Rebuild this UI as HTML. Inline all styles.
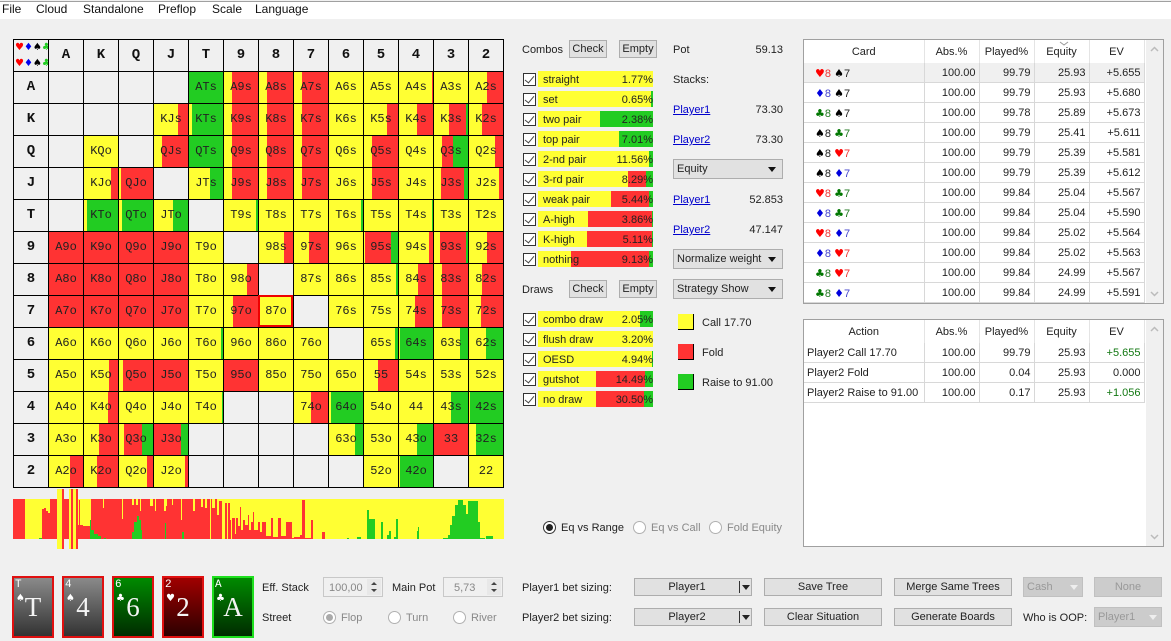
<!DOCTYPE html>
<html><head><meta charset="utf-8"><style>
html,body{margin:0;padding:0}
body{width:1171px;height:641px;overflow:hidden;background:#f0f0f0;position:relative;font:11px "Liberation Sans",sans-serif;color:#222}
.a{position:absolute;white-space:nowrap;line-height:14px;margin-top:1px}
.m{font-size:12px;color:#111;margin-top:0}
.menu{position:absolute;left:0;top:1px;width:1171px;height:18px;background:#fff;border-top:1px solid #a0a0a0;box-sizing:border-box}
.g{position:absolute;left:13px;top:39px;display:grid;grid-template-columns:repeat(14,34px);grid-auto-rows:31px;gap:1px;padding:1px;background:#000;font:12px/31px "Liberation Mono",monospace;color:#222;text-align:center}
.g b{--a:34px;--b:34px;font-weight:normal;background:linear-gradient(90deg,#ff3 var(--a),#f33 var(--a) var(--b),#2c2 var(--b))}
.g i{background:#f0f0f0}
.g em{background:#f0f0f0;font:bold 14px/31px "Liberation Mono",monospace;color:#111}
.g em.corner{font:10px/16px "DejaVu Sans",sans-serif;letter-spacing:0;white-space:pre;text-align:left;padding-left:1px;overflow:hidden}
.btn{position:absolute;box-sizing:border-box;background:#e1e1e1;border:1px solid #adadad;text-align:center;line-height:17px;color:#222}
.dis{color:#999;background:#ccc;border-color:#c0c0c0}
.c{position:absolute;left:523px;width:11px;height:11px;border:1px solid #333;background:#fff}
.c::after{content:"";position:absolute;left:3px;top:0;width:4px;height:8px;border:solid #444;border-width:0 1px 1px 0;transform:rotate(40deg)}
.bar{--a:115px;--b:115px;position:absolute;left:538px;width:115px;height:16px;line-height:16px;background:linear-gradient(90deg,#ff3 var(--a),#f33 var(--a) var(--b),#2c2 var(--b));color:#222}
.bar span{position:absolute;left:5px;top:1px}.bar u{position:absolute;right:0;top:1px;text-decoration:none}
.lnk{color:#00c;text-decoration:underline}
.cb{position:absolute;left:673px;width:110px;height:20px;box-sizing:border-box;background:#e1e1e1;border:1px solid #adadad;line-height:19px;padding-left:3px}
.cb::after{content:"";position:absolute;right:6px;top:7px;border:4px solid transparent;border-top:5px solid #111;border-bottom:0}
.sq{position:absolute;left:678px;width:15px;height:15px;border-right:1px solid #000;border-bottom:1px solid #000}
.frame{position:absolute;left:803px;width:359px;background:#fff;border:1px solid #a0a0a0;overflow:hidden}
table{position:absolute;left:0;top:0;table-layout:fixed;border-collapse:collapse;width:340px;font-size:11px;color:#222}
th{font-weight:normal;height:23px;padding:0;border-right:1px solid #e4e4e4;background:#fff}
td{height:18px;padding:1px 3px 0 0;text-align:right;border-right:1px solid #d8d8d8;border-bottom:1px solid #d8d8d8;line-height:14px}
td.k{text-align:left;padding-left:11px;white-space:pre}
td.l{text-align:left;padding-left:3px;white-space:nowrap}
tr.s td{background:#f0f0f0}
.k span{font:11px "DejaVu Sans",sans-serif;position:relative;top:1px}
.k .hh,.k .dd,.k .pp,.k .qq{font:11px "Liberation Sans",sans-serif}
.h{color:#f00}.hh{color:#e33}.d{color:#00d}.dd{color:#44c}.p{color:#000}.pp{color:#222}.q{color:#070}.qq{color:#272}
.plus{color:#171}
.sb{position:absolute;right:0;top:0;bottom:0;width:17px;background:#f0f0f0}
.sb svg{position:absolute;left:4px}
.r{position:absolute;width:11px;height:11px;border:1px solid #b0b0b0;border-radius:50%;background:#fff}
.r.on::after{content:"";position:absolute;left:2px;top:2px;width:7px;height:7px;border-radius:50%;background:#aaa}
.r.blk{border-color:#333}.r.blk::after{background:#222}
.card{position:absolute;top:576px;width:38px;height:58px;border:2px solid #e01010;color:#fff;overflow:hidden}
.card .t{position:absolute;left:1px;top:1px;font:11px/12px "Liberation Mono",monospace}
.card .s{position:absolute;left:2px;top:14px;font:10px/14px "DejaVu Sans",sans-serif}
.card .n{position:absolute;left:0;right:0;top:12px;text-align:center;font:27px/34px "Liberation Serif",serif;color:#f4f4f4}
.gy{background:linear-gradient(#8a8a8a,#333)}.gn{background:linear-gradient(#008a00,#002c00)}.rd{background:linear-gradient(#a00000,#2c0000)}
.spin{position:absolute;top:577px;width:60px;height:20px;box-sizing:border-box;border:1px solid #c8c8c8;color:#888;line-height:20px;background:#f0f0f0}
.gr{color:#888}
.dd2{position:absolute;left:739px;width:1px;height:12px;background:#333}
.arr{position:absolute;border:4px solid transparent;border-top:5px solid #222;border-bottom:0}
.hlb{position:absolute;left:258px;top:295px;width:31px;height:28px;border:2px solid #e00}
</style></head><body>
<div class="menu"></div>
<div class="a m" style="left:2px;top:2px">File</div><div class="a m" style="left:36px;top:2px">Cloud</div><div class="a m" style="left:83px;top:2px">Standalone</div><div class="a m" style="left:158px;top:2px">Preflop</div><div class="a m" style="left:212px;top:2px">Scale</div><div class="a m" style="left:255px;top:2px">Language</div>

<div class="g">
<em class="corner"><span style="color:#f00">♥</span><span style="color:#00e">♦</span><span style="color:#000">♠</span><span style="color:#2c2">♣</span>
<span style="color:#f00">♥</span><span style="color:#00e">♦</span><span style="color:#000">♠</span><span style="color:#2c2">♣</span></em><em>A</em><em>K</em><em>Q</em><em>J</em><em>T</em><em>9</em><em>8</em><em>7</em><em>6</em><em>5</em><em>4</em><em>3</em><em>2</em>
<em>A</em><i></i><i></i><i></i><i></i><b style="--a:0px;--b:0px">ATs</b><b style="--a:8px">A9s</b><b style="--a:8px">A8s</b><b style="--a:8px">A7s</b><b>A6s</b><b>A5s</b><b style="--a:33px">A4s</b><b>A3s</b><b style="--a:18px">A2s</b>
<em>K</em><i></i><i></i><i></i><b style="--a:24px">KJs</b><b style="--a:3px;--b:3px">KTs</b><b style="--a:8px">K9s</b><b style="--a:8px">K8s</b><b style="--a:8px">K7s</b><b>K6s</b><b style="--a:23px">K5s</b><b style="--a:18px">K4s</b><b style="--a:15px;--b:32px">K3s</b><b style="--a:13px">K2s</b>
<em>Q</em><i></i><b>KQo</b><i></i><b style="--a:8px">QJs</b><b style="--a:0px;--b:0px">QTs</b><b style="--a:8px">Q9s</b><b style="--a:8px">Q8s</b><b style="--a:8px">Q7s</b><b>Q6s</b><b style="--a:8px">Q5s</b><b>Q4s</b><b style="--a:8px;--b:19px">Q3s</b><b style="--a:26px">Q2s</b>
<em>J</em><i></i><b style="--a:27px">KJo</b><b style="--a:2px">QJo</b><i></i><b style="--a:21px;--b:21px">JTs</b><b style="--a:8px">J9s</b><b style="--a:8px">J8s</b><b style="--a:8px">J7s</b><b>J6s</b><b style="--a:8px">J5s</b><b>J4s</b><b style="--a:7px;--b:30px">J3s</b><b style="--a:30px">J2s</b>
<em>T</em><i></i><b style="--a:3px;--b:3px">KTo</b><b style="--a:3px;--b:3px">QTo</b><b style="--a:19px;--b:19px">JTo</b><i></i><b style="--a:32px;--b:32px">T9s</b><b>T8s</b><b>T7s</b><b style="--a:32px;--b:32px">T6s</b><b>T5s</b><b style="--a:33px;--b:33px">T4s</b><b>T3s</b><b>T2s</b>
<em>9</em><b style="--a:0px">A9o</b><b style="--a:0px">K9o</b><b style="--a:0px">Q9o</b><b style="--a:0px">J9o</b><b>T9o</b><i></i><b style="--a:25px">98s</b><b style="--a:15px">97s</b><b>96s</b><b style="--a:1px;--b:27px">95s</b><b style="--a:30px">94s</b><b style="--a:6px;--b:32px">93s</b><b style="--a:18px">92s</b>
<em>8</em><b style="--a:0px">A8o</b><b style="--a:0px">K8o</b><b style="--a:0px">Q8o</b><b style="--a:0px">J8o</b><b>T8o</b><b style="--a:23px">98o</b><i></i><b>87s</b><b>86s</b><b style="--a:32px;--b:32px">85s</b><b style="--a:19px">84s</b><b style="--a:8px">83s</b><b style="--a:13px">82s</b>
<em>7</em><b style="--a:0px">A7o</b><b style="--a:0px">K7o</b><b style="--a:0px">Q7o</b><b style="--a:0px">J7o</b><b>T7o</b><b style="--a:9px">97o</b><b>87o</b><i></i><b>76s</b><b>75s</b><b style="--a:16px">74s</b><b style="--a:8px">73s</b><b style="--a:12px">72s</b>
<em>6</em><b>A6o</b><b>K6o</b><b>Q6o</b><b>J6o</b><b style="--a:32px;--b:32px">T6o</b><b>96o</b><b>86o</b><b>76o</b><i></i><b style="--a:31px;--b:31px">65s</b><b style="--a:1px;--b:1px">64s</b><b style="--a:26px;--b:26px">63s</b><b style="--a:17px;--b:17px">62s</b>
<em>5</em><b>A5o</b><b style="--a:25px">K5o</b><b style="--a:4px">Q5o</b><b style="--a:0px">J5o</b><b>T5o</b><b style="--a:0px">95o</b><b>85o</b><b>75o</b><b>65o</b><b style="--a:14px">55</b><b>54s</b><b>53s</b><b>52s</b>
<em>4</em><b>A4o</b><b style="--a:24px">K4o</b><b>Q4o</b><b>J4o</b><b style="--a:33px;--b:33px">T4o</b><i></i><i></i><b style="--a:17px">74o</b><b style="--a:2px;--b:2px">64o</b><b>54o</b><b>44</b><b style="--a:17px;--b:17px">43s</b><b style="--a:1px;--b:1px">42s</b>
<em>3</em><b>A3o</b><b style="--a:15px">K3o</b><b style="--a:5px;--b:23px">Q3o</b><b style="--a:0px;--b:27px">J3o</b><i></i><i></i><i></i><i></i><b style="--a:26px;--b:26px">63o</b><b>53o</b><b style="--a:18px;--b:18px">43o</b><b style="--a:0px">33</b><b style="--a:7px;--b:7px">32s</b>
<em>2</em><b style="--a:21px">A2o</b><b style="--a:13px">K2o</b><b style="--a:28px">Q2o</b><b style="--a:31px">J2o</b><i></i><i></i><i></i><i></i><i></i><b>52o</b><b style="--a:1px;--b:1px">42o</b><i></i><b>22</b>
</div>
<div class="hlb"></div>

<svg style="position:absolute;left:0;top:485px" width="520" height="70" viewBox="0 485 520 70">
<rect x="13" y="499" width="491" height="40" fill="#ff3"/>
<rect x="57" y="489" width="7" height="60" fill="#ff3"/><rect x="69" y="489" width="9" height="60" fill="#ff3"/>
<rect x="62" y="489" width="2" height="60" fill="#f33"/><rect x="71" y="489" width="2" height="60" fill="#f33"/><rect x="76" y="489" width="2" height="60" fill="#f33"/>
<path fill="#f33" d="M13 539V499H25V539H42V509H44V508H46V511H48V513H50V499H57V539H64V499H69V539H78V525H79V500H80V525H83V526H90V539H91V499H103V508H104V499H122V519H123V499H132V505H134V499H136V505H138V499H140V511H141V499H150V506H153V499H155V511H156V499H164V511H166V506H167V499H172V505H173V499H181V520H182V499H193V511H195V499H201V507H203V499H205V508H207V499H210V539H211V499H212V508H215V499H217V515H219V501H222V539H225V503H227V539H228V503H230V520H231V539H232V518H235V534H236V518H238V526H240V507H241V530H243V520H245V525H248V515H249V530H251V522H253V512H254V530H258V522H260V532H262V522H266V536H271V518H273V537H278V518H281V536H286V522H292V538H294V537H300V535H302V500H305V538H311V520H313V539H322V532H325V539H13Z"/>
<path fill="#2c2" d="M39 539V538H42V539ZM90 539V520H91V530H94V534H98V536H101V539ZM104 539V538H106V539ZM132 539V532H134V522H137V516H139V520H141V530H142V539ZM165 539V523H166V539ZM182 539V532H184V539ZM347 539V538H349V539ZM357 539V537H361V539ZM367 539V510H369V519H375V539ZM381 539V522H383V539ZM387 539V535H389V531H391V539ZM394 539V537H396V519H398V539ZM417 539V531H418V527H419V539ZM443 539V538H448V535H450V525H452V516H455V505H458V500H463V505H466V514H468V501H478V522H480V538H485V539ZM486 539V536H493V539Z"/>
</svg>

<div class="card gy" style="left:12px"><span class="t">T</span><span class="s">♠</span><span class="n">T</span></div>
<div class="card gy" style="left:62px"><span class="t">4</span><span class="s">♠</span><span class="n">4</span></div>
<div class="card gn" style="left:112px"><span class="t">6</span><span class="s">♣</span><span class="n">6</span></div>
<div class="card rd" style="left:162px"><span class="t">2</span><span class="s">♥</span><span class="n">2</span></div>
<div class="card gn" style="left:212px;border-color:#1ee01e"><span class="t">A</span><span class="s">♣</span><span class="n">A</span></div>

<div class="a" style="left:262px;top:580px">Eff. Stack</div>
<div class="spin" style="left:323px;padding-left:5px">100,00<svg style="position:absolute;right:1px;top:1px" width="14" height="16"><rect width="14" height="16" fill="#e8e8e8"/><path d="M4 6l3-3 3 3zM4 10l3 3 3-3z" fill="#444"/></svg></div>
<div class="a" style="left:392px;top:580px">Main Pot</div>
<div class="spin" style="left:443px;padding-left:10px">5,73<svg style="position:absolute;right:1px;top:1px" width="14" height="16"><rect width="14" height="16" fill="#e8e8e8"/><path d="M4 6l3-3 3 3zM4 10l3 3 3-3z" fill="#444"/></svg></div>
<div class="a" style="left:262px;top:610px">Street</div>
<div class="r on" style="left:323px;top:611px"></div><div class="a gr" style="left:341px;top:610px">Flop</div>
<div class="r" style="left:388px;top:611px"></div><div class="a gr" style="left:406px;top:610px">Turn</div>
<div class="r" style="left:453px;top:611px"></div><div class="a gr" style="left:471px;top:610px">River</div>

<div class="a" style="left:522px;top:42px">Combos</div>
<div class="btn" style="left:569px;top:40px;width:38px;height:18px">Check</div>
<div class="btn" style="left:619px;top:40px;width:38px;height:18px">Empty</div>

<div class="c" style="top:73px"></div><div class="bar" style="top:71px"><span>straight</span><u>1.77%</u></div>
<div class="c" style="top:93px"></div><div class="bar" style="top:91px;--a:113px;--b:113px"><span>set</span><u>0.65%</u></div>
<div class="c" style="top:113px"></div><div class="bar" style="top:111px;--a:62px;--b:62px"><span>two pair</span><u>2.38%</u></div>
<div class="c" style="top:133px"></div><div class="bar" style="top:131px;--a:81px;--b:81px"><span>top pair</span><u>7.01%</u></div>
<div class="c" style="top:153px"></div><div class="bar" style="top:151px;--a:111px;--b:111px"><span>2-nd pair</span><u>11.56%</u></div>
<div class="c" style="top:173px"></div><div class="bar" style="top:171px;--a:90px;--b:108px"><span>3-rd pair</span><u>8.29%</u></div>
<div class="c" style="top:193px"></div><div class="bar" style="top:191px;--a:73px;--b:111px"><span>weak pair</span><u>5.44%</u></div>
<div class="c" style="top:213px"></div><div class="bar" style="top:211px;--a:50px;--b:114px"><span>A-high</span><u>3.86%</u></div>
<div class="c" style="top:233px"></div><div class="bar" style="top:231px;--a:49px;--b:114px"><span>K-high</span><u>5.11%</u></div>
<div class="c" style="top:253px"></div><div class="bar" style="top:251px;--a:33px;--b:111px"><span>nothing</span><u>9.13%</u></div>

<div class="a" style="left:522px;top:282px">Draws</div>
<div class="btn" style="left:569px;top:280px;width:38px;height:18px">Check</div>
<div class="btn" style="left:619px;top:280px;width:38px;height:18px">Empty</div>

<div class="c" style="top:313px"></div><div class="bar" style="top:311px;--a:102px;--b:102px"><span>combo draw</span><u>2.05%</u></div>
<div class="c" style="top:333px"></div><div class="bar" style="top:331px"><span>flush draw</span><u>3.20%</u></div>
<div class="c" style="top:353px"></div><div class="bar" style="top:351px;--a:114px;--b:114px"><span>OESD</span><u>4.94%</u></div>
<div class="c" style="top:373px"></div><div class="bar" style="top:371px;--a:58px;--b:107px"><span>gutshot</span><u>14.49%</u></div>
<div class="c" style="top:393px"></div><div class="bar" style="top:391px;--a:58px;--b:106px"><span>no draw</span><u>30.50%</u></div>

<div class="a" style="left:673px;top:42px">Pot</div><div class="a" style="right:388px;top:42px">59.13</div>
<div class="a" style="left:673px;top:72px">Stacks:</div>
<div class="a lnk" style="left:673px;top:102px">Player1</div><div class="a" style="right:388px;top:102px">73.30</div>
<div class="a lnk" style="left:673px;top:132px">Player2</div><div class="a" style="right:388px;top:132px">73.30</div>
<div class="cb" style="top:159px">Equity</div>
<div class="a lnk" style="left:673px;top:192px">Player1</div><div class="a" style="right:388px;top:192px">52.853</div>
<div class="a lnk" style="left:673px;top:222px">Player2</div><div class="a" style="right:388px;top:222px">47.147</div>
<div class="cb" style="top:249px">Normalize weight</div>
<div class="cb" style="top:279px">Strategy Show</div>
<div class="sq" style="top:314px;background:#ff3"></div><div class="a" style="left:702px;top:315px">Call 17.70</div>
<div class="sq" style="top:344px;background:#f33"></div><div class="a" style="left:702px;top:345px">Fold</div>
<div class="sq" style="top:374px;background:#2c2"></div><div class="a" style="left:702px;top:375px">Raise to 91.00</div>

<div class="r blk on" style="left:543px;top:521px"></div><div class="a" style="left:561px;top:520px">Eq vs Range</div>
<div class="r" style="left:633px;top:521px"></div><div class="a gr" style="left:651px;top:520px">Eq vs Call</div>
<div class="r" style="left:709px;top:521px"></div><div class="a gr" style="left:727px;top:520px">Fold Equity</div>

<div class="frame" style="top:39px;height:263px">
<table><colgroup><col style="width:120px"><col style="width:55px"><col style="width:55px"><col style="width:55px"><col style="width:55px"></colgroup>
<tr><th>Card</th><th>Abs.%</th><th>Played%</th><th>Equity</th><th>EV</th></tr>
<tr class="s"><td class="k"><span class="h">♥</span><span class="hh">8</span> <span class="p">♠</span><span class="pp">7</span></td><td>100.00</td><td>99.79</td><td>25.93</td><td>+5.655</td></tr>
<tr><td class="k"><span class="d">♦</span><span class="dd">8</span> <span class="p">♠</span><span class="pp">7</span></td><td>100.00</td><td>99.79</td><td>25.93</td><td>+5.680</td></tr>
<tr><td class="k"><span class="q">♣</span><span class="qq">8</span> <span class="p">♠</span><span class="pp">7</span></td><td>100.00</td><td>99.78</td><td>25.89</td><td>+5.673</td></tr>
<tr><td class="k"><span class="p">♠</span><span class="pp">8</span> <span class="q">♣</span><span class="qq">7</span></td><td>100.00</td><td>99.79</td><td>25.41</td><td>+5.611</td></tr>
<tr><td class="k"><span class="p">♠</span><span class="pp">8</span> <span class="h">♥</span><span class="hh">7</span></td><td>100.00</td><td>99.79</td><td>25.39</td><td>+5.581</td></tr>
<tr><td class="k"><span class="p">♠</span><span class="pp">8</span> <span class="d">♦</span><span class="dd">7</span></td><td>100.00</td><td>99.79</td><td>25.39</td><td>+5.612</td></tr>
<tr><td class="k"><span class="h">♥</span><span class="hh">8</span> <span class="q">♣</span><span class="qq">7</span></td><td>100.00</td><td>99.84</td><td>25.04</td><td>+5.567</td></tr>
<tr><td class="k"><span class="d">♦</span><span class="dd">8</span> <span class="q">♣</span><span class="qq">7</span></td><td>100.00</td><td>99.84</td><td>25.04</td><td>+5.590</td></tr>
<tr><td class="k"><span class="h">♥</span><span class="hh">8</span> <span class="d">♦</span><span class="dd">7</span></td><td>100.00</td><td>99.84</td><td>25.02</td><td>+5.564</td></tr>
<tr><td class="k"><span class="d">♦</span><span class="dd">8</span> <span class="h">♥</span><span class="hh">7</span></td><td>100.00</td><td>99.84</td><td>25.02</td><td>+5.563</td></tr>
<tr><td class="k"><span class="q">♣</span><span class="qq">8</span> <span class="h">♥</span><span class="hh">7</span></td><td>100.00</td><td>99.84</td><td>24.99</td><td>+5.567</td></tr>
<tr><td class="k"><span class="q">♣</span><span class="qq">8</span> <span class="d">♦</span><span class="dd">7</span></td><td>100.00</td><td>99.84</td><td>24.99</td><td>+5.591</td></tr>
</table>
<svg style="position:absolute;left:255px;top:1px" width="10" height="5"><path d="M1 1l4 3 4-3" fill="none" stroke="#999"/></svg>
<div class="sb"><svg style="top:6px" width="9" height="6"><path d="M1 5l3.500-3.500L8 5" fill="none" stroke="#bbb" stroke-width="1.500"/></svg><svg style="bottom:6px" width="9" height="6"><path d="M1 1l3.500 3.500L8 1" fill="none" stroke="#bbb" stroke-width="1.500"/></svg></div>
</div>

<div class="frame" style="top:319px;height:226px">
<table><colgroup><col style="width:120px"><col style="width:55px"><col style="width:55px"><col style="width:55px"><col style="width:55px"></colgroup>
<tr><th>Action</th><th>Abs.%</th><th>Played%</th><th>Equity</th><th>EV</th></tr>
<tr><td class="l">Player2 Call 17.70</td><td>100.00</td><td>99.79</td><td>25.93</td><td class="plus">+5.655</td></tr>
<tr><td class="l">Player2 Fold</td><td>100.00</td><td>0.04</td><td>25.93</td><td>0.000</td></tr>
<tr><td class="l">Player2 Raise to 91.00</td><td>100.00</td><td>0.17</td><td>25.93</td><td class="plus">+1.056</td></tr>
</table>
<div class="sb"><svg style="top:6px" width="9" height="6"><path d="M1 5l3.500-3.500L8 5" fill="none" stroke="#bbb" stroke-width="1.500"/></svg><svg style="bottom:6px" width="9" height="6"><path d="M1 1l3.500 3.500L8 1" fill="none" stroke="#bbb" stroke-width="1.500"/></svg></div>
</div>

<div class="a" style="left:522px;top:580px">Player1 bet sizing:</div>
<div class="btn" style="left:634px;top:578px;width:118px;height:18px;padding-right:12px">Player1</div><div class="dd2" style="top:581px"></div><div class="arr" style="left:742px;top:585px"></div>
<div class="btn" style="left:764px;top:578px;width:118px;height:18px">Save Tree</div>
<div class="btn" style="left:894px;top:578px;width:118px;height:18px">Merge Same Trees</div>
<div class="btn dis" style="left:1023px;top:577px;width:60px;height:20px;text-align:left;padding-left:3px;line-height:19px">Cash</div><div class="arr" style="left:1070px;top:585px;border-top-color:#eee"></div>
<div class="btn dis" style="left:1094px;top:577px;width:68px;height:20px;line-height:19px">None</div>
<div class="a" style="left:522px;top:610px">Player2 bet sizing:</div>
<div class="btn" style="left:634px;top:608px;width:118px;height:18px;padding-right:12px">Player2</div><div class="dd2" style="top:611px"></div><div class="arr" style="left:742px;top:615px"></div>
<div class="btn" style="left:764px;top:608px;width:118px;height:18px">Clear Situation</div>
<div class="btn" style="left:894px;top:608px;width:118px;height:18px">Generate Boards</div>
<div class="a" style="left:1023px;top:610px">Who is OOP:</div>
<div class="btn dis" style="left:1094px;top:607px;width:68px;height:20px;text-align:left;padding-left:3px;line-height:19px">Player1</div><div class="arr" style="left:1149px;top:615px;border-top-color:#eee"></div>
</body></html>
